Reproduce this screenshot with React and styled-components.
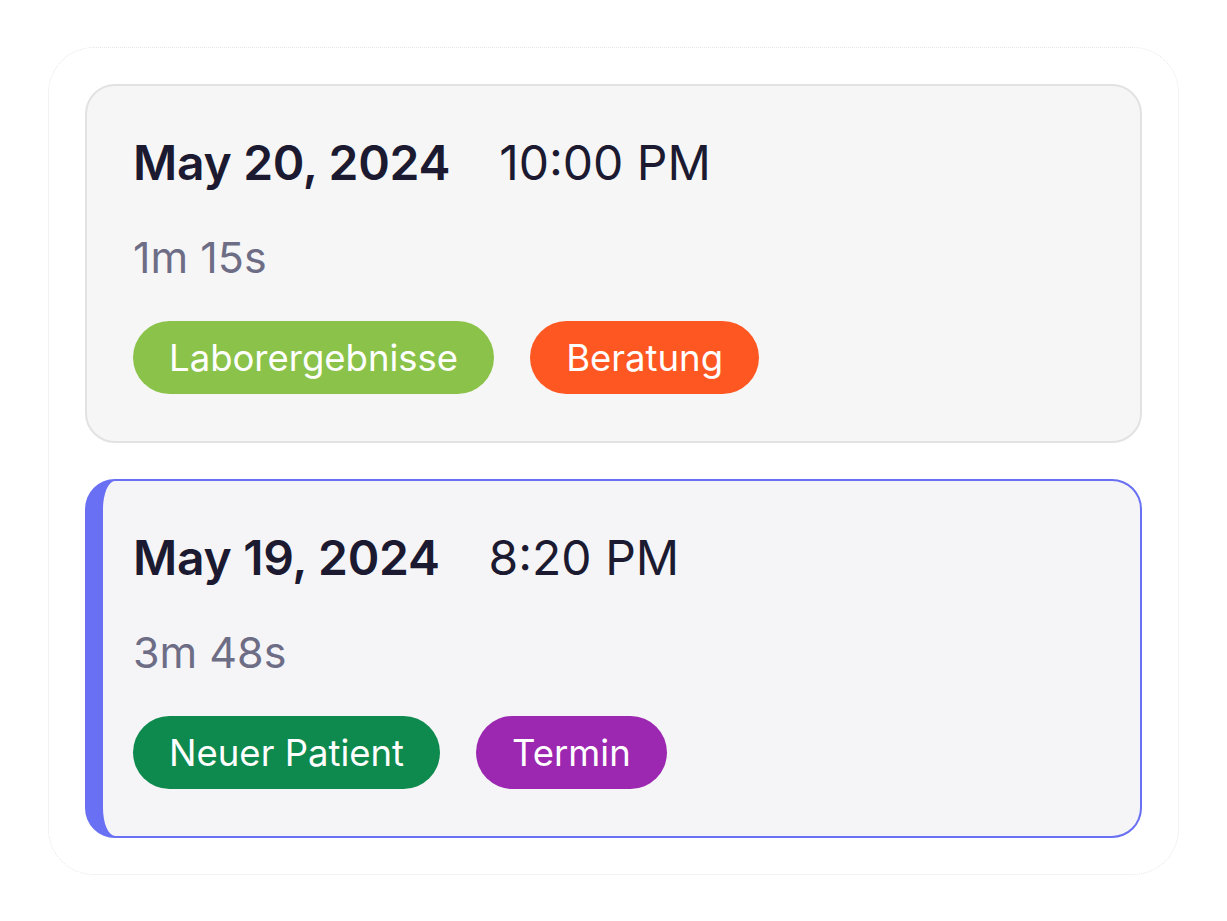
import styled, { createGlobalStyle } from "styled-components";

const GlobalStyle = createGlobalStyle`
body{
  margin:0;
  background:#ffffff;
  font-family:Inter, "Noto Sans", sans-serif;
}
`;

const consultations = [
    { id: 1, date: "May 20, 2024", time: "10:00 PM", duration: "1m 15s", active: false,
      tags: [{ label: "Laborergebnisse", color: "#8bc34a" }, { label: "Beratung", color: "#ff5722" }] },
    { id: 2, date: "May 19, 2024", time: "8:20 PM", duration: "3m 48s", active: true,
      tags: [{ label: "Neuer Patient", color: "#0e8a4e" }, { label: "Termin", color: "#9c27b0" }] },
];

export default function App(){
    return(
        <>
        <GlobalStyle/>
        <Page>
            <Panel>
                {consultations.map(item => (
                    <Card key={item.id} active={item.active}>
                        <Header>
                            <DateText>{item.date}</DateText>
                            <TimeText>{item.time}</TimeText>
                        </Header>
                        <Duration>{item.duration}</Duration>
                        <Tags>
                            {item.tags.map(tag => (
                                <Tag key={tag.label} color={tag.color}>{tag.label}</Tag>
                            ))}
                        </Tags>
                    </Card>
                ))}
            </Panel>
        </Page>
        </>
    );
}

const Page = styled.div`
padding:47px 48px;
`;

const Panel = styled.div`
border:1px dotted #e6e6e6;
border-radius:46px;
padding:36px;
display:flex;
flex-direction:column;
gap:36px;
`;

const Card = styled.div`
background:${props => props.active ? "#f5f5f8" : "#f6f6f6"};
border:2px solid ${props => props.active ? "#6970f3" : "#e2e2e2"};
border-left-width:${props => props.active ? "18px" : "2px"};
border-radius:30px;
padding:48px 46px 47px ${props => props.active ? "30px" : "46px"};
`;

const Header = styled.div`
display:flex;
align-items:baseline;
gap:49px;
line-height:58px;
`;

const DateText = styled.span`
font-size:48px;
font-weight:600;
letter-spacing:-0.3px;
color:#1b1a30;
`;

const TimeText = styled.span`
font-size:48px;
font-weight:400;
color:#1b1a30;
`;

const Duration = styled.div`
margin-top:40px;
font-size:43px;
line-height:50px;
color:#6e6d86;
`;

const Tags = styled.div`
display:flex;
gap:36px;
margin-top:39px;
`;

const Tag = styled.span`
display:inline-flex;
align-items:center;
height:73px;
padding:0 36px;
border-radius:37px;
background:${props => props.color};
color:#ffffff;
font-size:36.5px;
`;
